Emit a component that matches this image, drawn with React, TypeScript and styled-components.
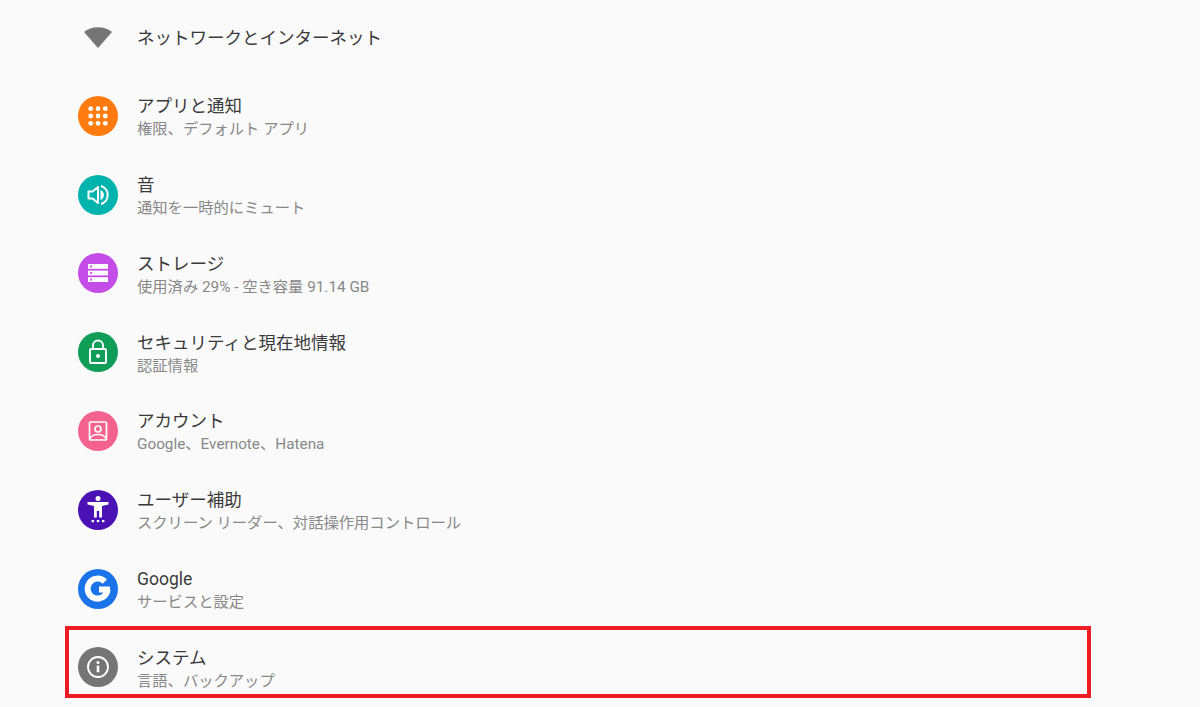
import React, { ReactNode } from 'react';
import styled, { createGlobalStyle } from 'styled-components';

const GlobalStyle = createGlobalStyle`
  html, body {
    margin: 0;
    padding: 0;
    height: 100%;
    background: #fafafa;
    overflow: hidden;
  }
`;

const Page = styled.div`
  width: 1200px;
  height: 707px;
  background: #fafafa;
  overflow: hidden;
  font-family: Roboto, "Noto Sans CJK JP", sans-serif;
`;

const List = styled.ul`
  list-style: none;
  margin: -2.4px 0 0;
  padding: 0 0 0 78px;
`;

const Row = styled.li`
  position: relative;
  display: flex;
  align-items: center;
  height: 78.8px;
`;

const Badge = styled.div<{ $bg: string }>`
  flex: none;
  width: 40px;
  height: 40px;
  border-radius: 50%;
  background: ${p => p.$bg};
  display: flex;
  align-items: center;
  justify-content: center;
  margin-right: 19px;
`;

const Texts = styled.div<{ $single: boolean }>`
  display: flex;
  flex-direction: column;
  margin-top: ${p => (p.$single ? '2px' : '4px')};
`;

const Title = styled.div`
  font-size: 17.5px;
  line-height: 23px;
  color: #3a3a3a;
`;

const Sub = styled.div`
  font-size: 15.3px;
  line-height: 21px;
  margin-top: 1px;
  color: #888888;
`;

const Highlight = styled.div`
  position: absolute;
  left: -13px;
  top: -2px;
  width: 1026px;
  height: 72px;
  box-sizing: border-box;
  border: 4px solid #ee1c25;
  pointer-events: none;
`;

const WifiIcon = () => (
  <svg width="40" height="40" viewBox="0 0 40 40">
    <path d="M6 15 C13 8.5 27 8.5 34 15 L20 31 Z" fill="#757575" />
  </svg>
);

const AppsIcon = () => (
  <svg width="40" height="40" viewBox="0 0 40 40" fill="#fff">
    {[12.7, 20, 27.3].map(y =>
      [12.7, 20, 27.3].map(x => <circle key={`${x}-${y}`} cx={x} cy={y} r="2.4" />)
    )}
  </svg>
);

const SoundIcon = () => (
  <svg width="40" height="40" viewBox="0 0 40 40" fill="none" stroke="#fff" strokeWidth="2">
    <path d="M10.5 16.5 h4 l5.5 -4.5 v16 l-5.5 -4.5 h-4 z" strokeLinejoin="round" />
    <path d="M22.5 15 a5.4 5.4 0 0 1 0 10 z" fill="#fff" stroke="none" />
    <path d="M23 11 a9.4 9.4 0 0 1 0 18" />
  </svg>
);

const StorageIcon = () => (
  <svg width="40" height="40" viewBox="0 0 40 40">
    {[11, 17.6, 24.2].map(y => (
      <g key={y}>
        <rect x="10" y={y} width="20" height="4.8" fill="#fff" />
        <rect x="12.2" y={y + 1.5} width="1.9" height="1.9" fill="#c44de8" />
      </g>
    ))}
  </svg>
);

const LockIcon = () => (
  <svg width="40" height="40" viewBox="0 0 40 40" fill="none" stroke="#fff" strokeWidth="1.9">
    <rect x="12" y="17" width="16" height="14" rx="1" />
    <path d="M15 17 v-3.5 a5 5 0 0 1 10 0 v3.5" />
    <circle cx="20" cy="24" r="2" fill="#fff" stroke="none" />
  </svg>
);

const AccountIcon = () => (
  <svg width="40" height="40" viewBox="0 0 40 40" fill="none" stroke="#fff" strokeWidth="1.7">
    <rect x="11.5" y="11" width="17" height="18" rx="1" />
    <circle cx="20" cy="18" r="3" />
    <path d="M11.5 28.5 C13 24.5 17 23.5 20 23.5 C23 23.5 27 24.5 28.5 28.5" />
  </svg>
);

const AccessIcon = () => (
  <svg width="40" height="40" viewBox="0 0 40 40" fill="#fff">
    <circle cx="20" cy="8.5" r="2.5" />
    <path d="M9.5 12 L30.5 12 V14.4 L24 16 V27.5 H21.2 V21 H18.8 V27.5 H16 V16 L9.5 14.4 Z" />
    <rect x="13.6" y="30" width="2.4" height="2.2" />
    <rect x="18.8" y="30" width="2.4" height="2.2" />
    <rect x="24" y="30" width="2.4" height="2.2" />
  </svg>
);

const GoogleIcon = () => (
  <svg width="40" height="40" viewBox="0 0 40 40" fill="none">
    <path d="M32 20.5 H21 M29.6 20.5 A10 10 0 1 1 26.8 12.6" stroke="#fff" strokeWidth="6" />
  </svg>
);

const InfoIcon = () => (
  <svg width="40" height="40" viewBox="0 0 40 40" fill="none">
    <circle cx="20" cy="20" r="10" stroke="#fff" strokeWidth="1.9" />
    <rect x="18.7" y="18.6" width="2.6" height="6.6" fill="#fff" />
    <circle cx="20" cy="15.6" r="1.5" fill="#fff" />
  </svg>
);

interface Item {
  title: string;
  sub?: string;
  bg: string;
  icon: ReactNode;
  highlighted?: boolean;
}

const items: Item[] = [
  { title: 'ネットワークとインターネット', bg: 'transparent', icon: <WifiIcon /> },
  { title: 'アプリと通知', sub: '権限、デフォルト アプリ', bg: '#ff7b0f', icon: <AppsIcon /> },
  { title: '音', sub: '通知を一時的にミュート', bg: '#00b3ad', icon: <SoundIcon /> },
  { title: 'ストレージ', sub: '使用済み 29% - 空き容量 91.14 GB', bg: '#c44de8', icon: <StorageIcon /> },
  { title: 'セキュリティと現在地情報', sub: '認証情報', bg: '#0f9d58', icon: <LockIcon /> },
  { title: 'アカウント', sub: 'Google、Evernote、Hatena', bg: '#f4628f', icon: <AccountIcon /> },
  { title: 'ユーザー補助', sub: 'スクリーン リーダー、対話操作用コントロール', bg: '#4a11b5', icon: <AccessIcon /> },
  { title: 'Google', sub: 'サービスと設定', bg: '#1a73e8', icon: <GoogleIcon /> },
  { title: 'システム', sub: '言語、バックアップ', bg: '#757575', icon: <InfoIcon />, highlighted: true },
];

export default function App() {
  return (
    <Page>
      <GlobalStyle />
      <List>
        {items.map(item => (
          <Row key={item.title}>
            <Badge $bg={item.bg}>{item.icon}</Badge>
            <Texts $single={!item.sub}>
              <Title>{item.title}</Title>
              {item.sub && <Sub>{item.sub}</Sub>}
            </Texts>
            {item.highlighted && <Highlight />}
          </Row>
        ))}
      </List>
    </Page>
  );
}
